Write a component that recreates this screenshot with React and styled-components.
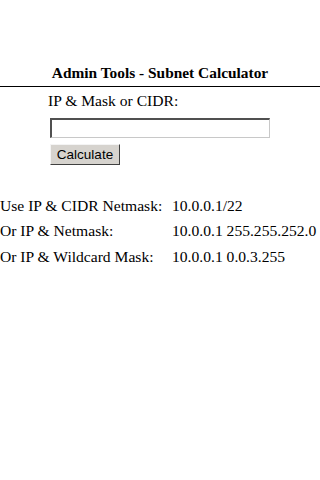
import styled, { createGlobalStyle } from "styled-components";

const Global = createGlobalStyle`
  html, body {
    margin: 0;
    padding: 0;
    background: #fff;
  }
  body {
    font-family: "Liberation Serif", "Times New Roman", serif;
    font-size: 15.6px;
    color: #000;
  }
`;

const Page = styled.div`
  width: 320px;
  height: 480px;
  padding-top: 63px;
  box-sizing: border-box;
`;

const Title = styled.h1`
  margin: 0;
  font-size: 15.4px;
  font-weight: bold;
  text-align: center;
  line-height: 19px;
  padding-bottom: 4px;
  border-bottom: 1px solid #000;
`;

const Form = styled.div`
  display: flex;
  flex-direction: column;
  align-items: flex-start;
  padding: 4px 0 0 48px;
`;

const Label = styled.div`
  line-height: 19px;
`;

const Input = styled.input`
  box-sizing: border-box;
  width: 220px;
  height: 20px;
  margin: 8px 0 0 2px;
  border: 1px solid #c8c8c8;
  border-top: 2px solid #505050;
  border-left: 2px solid #505050;
  background: #fff;
`;

const Button = styled.button`
  box-sizing: border-box;
  margin: 6px 0 0 2px;
  width: 70px;
  height: 21px;
  padding: 0;
  font-family: "Liberation Sans", Arial, sans-serif;
  font-size: 13.5px;
  color: #000;
  background: #d6d3ce;
  border: 1px solid;
  border-color: #f4f4f4 #404040 #404040 #f4f4f4;
`;

const Results = styled.table`
  margin-top: 28px;
  border-collapse: collapse;
  td {
    padding: 0;
    height: 25.5px;
    white-space: nowrap;
  }
  td:first-child {
    width: 172px;
  }
`;

const rows = [
  ["Use IP & CIDR Netmask:", "10.0.0.1/22"],
  ["Or IP & Netmask:", "10.0.0.1 255.255.252.0"],
  ["Or IP & Wildcard Mask:", "10.0.0.1 0.0.3.255"],
];

export default function App() {
  return (
    <>
      <Global />
      <Page>
        <Title>Admin Tools - Subnet Calculator</Title>
        <Form>
          <Label>IP &amp; Mask or CIDR:</Label>
          <Input type="text" />
          <Button>Calculate</Button>
        </Form>
        <Results>
          <tbody>
            {rows.map(([k, v]) => (
              <tr key={k}>
                <td>{k}</td>
                <td>{v}</td>
              </tr>
            ))}
          </tbody>
        </Results>
      </Page>
    </>
  );
}
